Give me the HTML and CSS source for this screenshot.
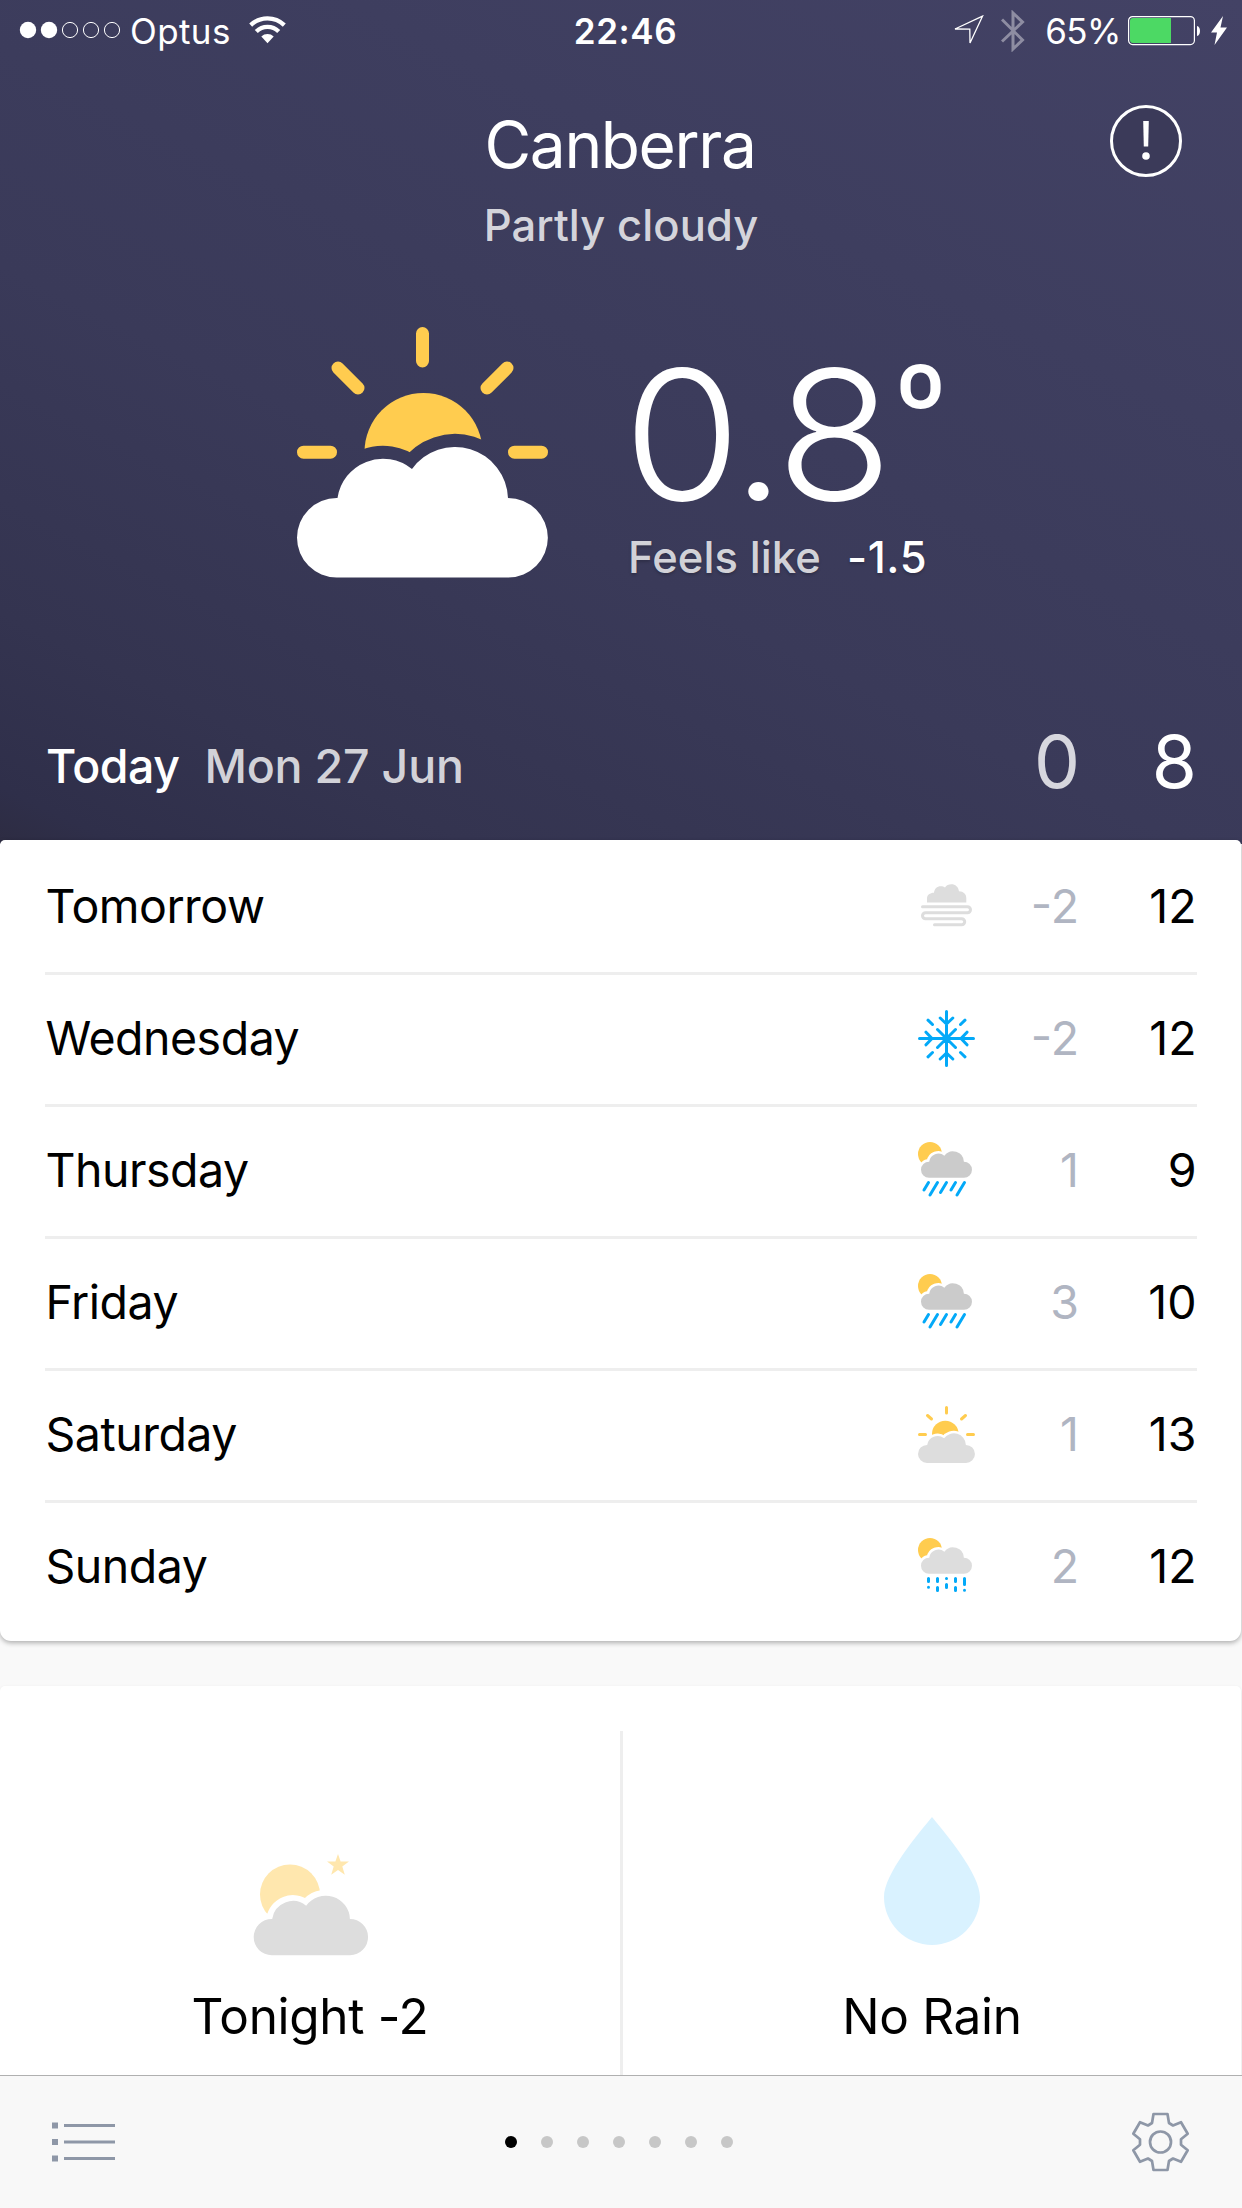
FILE: index.html
```html
<!DOCTYPE html>
<html lang="en">
<head>
<meta charset="utf-8">
<title>Weather</title>
<link rel="stylesheet" href="styles.css">
</head>
<body>
<svg class="defs" width="0" height="0" aria-hidden="true">
  <defs>
    <path id="cloud" d="M39.7 132A39.7 39.7 0 0 1 39.7 52.6H40.5A46 46 0 0 1 115 23.5A53 53 0 0 1 211 52.6A39.7 39.7 0 0 1 211.3 132Z"/>
    <mask id="cut-small" maskUnits="userSpaceOnUse" x="0" y="0" width="57" height="57">
      <rect width="57" height="57" fill="#fff"/>
      <use href="#cloud" transform="translate(3 9) scale(.2032)" fill="#000" stroke="#000" stroke-width="26"/>
    </mask>
    <g id="sun-behind">
      <circle cx="12" cy="12" r="12" fill="#ffcc4f" mask="url(#cut-small)"/>
      <use href="#cloud" transform="translate(3 9) scale(.2032)"/>
    </g>
    <g id="showers">
      <use href="#sun-behind" fill="#cbcbcb"/>
      <path d="M10.5 40.5L6 48M19.500 40.500L12 53M28.500 40.500L22.500 50.500M37.500 40.500L33 48M46.500 40.500L39 53" fill="none" stroke="#03a9f8" stroke-width="3" stroke-linecap="round"/>
    </g>
  </defs>
</svg>
<div class="screen">
  <header class="hero">
    <div class="status">
      <div class="status-left">
        <svg class="signal" width="102" height="18" viewBox="0 0 102 18"><g fill="#fff"><circle cx="9" cy="9" r="8.200"/><circle cx="30" cy="9" r="8.200"/></g><g fill="none" stroke="#fff" stroke-width="1"><circle cx="51" cy="9" r="7.600"/><circle cx="72" cy="9" r="7.600"/><circle cx="93" cy="9" r="7.600"/></g></svg>
        <span class="carrier">Optus</span>
        <svg class="wifi" width="37" height="28" viewBox="0 0 37 28"><g fill="none" stroke="#fff" stroke-width="4.300"><path d="M1.700 9.100A24.500 24.500 0 0 1 35.300 9.100"/><path d="M7.300 15.500A16 16 0 0 1 29.700 15.500"/></g><path d="M18.500 27.300L12.300 20.600A9 9 0 0 1 24.700 20.600Z" fill="#fff"/></svg>
      </div>
      <span class="clock">22:46</span>
      <div class="status-right">
        <svg class="locate" width="30" height="30" viewBox="0 0 30 30"><path d="M28.500 1.200L1 14L15.800 14.200L16 28Z" fill="none" stroke="#fff" stroke-width="1.300"/></svg>
        <svg class="bluetooth" width="24" height="42" viewBox="0 0 24 42"><path d="M1 9.500L21.500 30L12 39V3L21.500 12L1 31.500" fill="none" stroke="#8e8da2" stroke-width="3"/></svg>
        <span class="percent">65%</span>
        <svg class="battery" width="73" height="30" viewBox="0 0 73 30"><rect x=".600" y=".600" width="65.800" height="28" rx="4" fill="none" stroke="#fff" stroke-width="1.200"/><path d="M5 2H43V27H5A3 3 0 0 1 2 24V5A3 3 0 0 1 5 2Z" fill="#4cd964"/><path d="M69 10C73 10.500 73 19.500 69 20Z" fill="#fff"/></svg>
        <svg class="bolt" width="16" height="30" viewBox="0 0 16 30"><path d="M12 0L0 16.500H6L3.500 29L16 11.500H9.500Z" fill="#fff"/></svg>
      </div>
    </div>
    <div class="place">
      <div class="place-text">
        <h1 class="city">Canberra</h1>
        <p class="condition">Partly cloudy</p>
      </div>
      <svg class="alert" width="72" height="72" viewBox="0 0 72 72"><circle cx="36" cy="36" r="34.500" fill="#3b3a59" stroke="#fff" stroke-width="3"/><path d="M33.200 16H38.800L38.200 41.500H33.800Z" fill="#fff"/><circle cx="36" cy="51" r="3.800" fill="#fff"/></svg>
    </div>
    <div class="now">
      <svg class="now-icon" width="251" height="251" viewBox="0 0 251 251">
        <mask id="cut-now" maskUnits="userSpaceOnUse" x="0" y="0" width="251" height="251"><rect width="251" height="251" fill="#fff"/><use href="#cloud" transform="translate(0 118.500)" fill="#000" stroke="#000" stroke-width="26"/></mask>
        <circle cx="126.500" cy="125" r="59" fill="#ffcc4f" mask="url(#cut-now)"/>
        <path d="M125.500 6.500V34M41 41L61 61M210 41L190 61M6.500 125.200H33.500M217.500 125.200H244.500" fill="none" stroke="#ffcc4f" stroke-width="13" stroke-linecap="round"/>
        <use href="#cloud" transform="translate(0 118.500)" fill="#fff"/>
      </svg>
      <div class="now-text">
        <div class="temp"><span class="temp-value">0.8</span><span class="temp-unit">º</span></div>
        <div class="feels"><span class="feels-label">Feels like</span><span class="feels-value">-1.5</span></div>
      </div>
    </div>
    <div class="today">
      <span class="today-name">Today</span>
      <span class="today-date">Mon 27 Jun</span>
      <span class="today-low">0</span>
      <span class="today-high">8</span>
    </div>
  </header>
  <main>
    <section class="card forecast">
      <div class="day"><span class="name">Tomorrow</span>
        <svg class="icon" width="57" height="57" viewBox="0 0 57 57"><path d="M9 24.500V20.500C9 17 12 14.800 16 14.800C16.300 11 19 8.300 22.800 8.300C24.500 8.300 25.800 8.700 27 9.500C28.400 7.400 30.600 6.300 33.300 6.300C37.500 6.300 40.300 9 41 13.200C45.500 13.300 48.300 16 48.300 20V24.500Z" fill="#ddd"/><path d="M4.500 28.700H49.500A3 3 0 0 1 49.500 34.700H7.500A3 3 0 0 0 7.500 40.700H43.700A3 3 0 0 1 43.700 46.700H16.500" fill="none" stroke="#ddd" stroke-width="3" stroke-linecap="round"/></svg>
        <span class="low">-2</span><span class="high">12</span></div>
      <div class="day"><span class="name">Wednesday</span>
        <svg class="icon" width="57" height="57" viewBox="-28.500 -28.500 57 57"><path d="M0-27V27M-27 0H27M-9 -9L9 9M9-9L-9 9M-18.500-18.300L-14-14M18.500-18.300L14-14M-18.500 18.300L-14 14M18.500 18.300L14 14M-6.300-20.500L0-14.500L6.300-20.500M-6.300 20.500L0 14.500L6.300 20.500M-20.500-6.300L-14.500 0L-20.500 6.300M20.500-6.300L14.500 0L20.500 6.300" fill="none" stroke="#03a9f8" stroke-width="3" stroke-linecap="round"/></svg>
        <span class="low">-2</span><span class="high">12</span></div>
      <div class="day"><span class="name">Thursday</span>
        <svg class="icon" width="57" height="57" viewBox="0 0 57 57"><use href="#showers"/></svg>
        <span class="low">1</span><span class="high">9</span></div>
      <div class="day"><span class="name">Friday</span>
        <svg class="icon" width="57" height="57" viewBox="0 0 57 57"><use href="#showers"/></svg>
        <span class="low">3</span><span class="high">10</span></div>
      <div class="day"><span class="name">Saturday</span>
        <svg class="icon" width="57" height="57" viewBox="0 0 57 57">
          <mask id="cut-sat" maskUnits="userSpaceOnUse" x="0" y="0" width="57" height="57"><rect width="57" height="57" fill="#fff"/><use href="#cloud" transform="translate(0 27) scale(.227)" fill="#000" stroke="#000" stroke-width="22"/></mask>
          <circle cx="27.300" cy="28" r="13.300" fill="#ffcc4f" mask="url(#cut-sat)"/>
          <path d="M28.500 1.500V7M9.500 9.500L13.500 13M47.500 9.500L43.500 13M1.500 28.500H7.500M49.500 28.500H55.500" fill="none" stroke="#ffcc4f" stroke-width="3" stroke-linecap="round"/>
          <use href="#cloud" transform="translate(0 27) scale(.227)" fill="#ddd"/>
        </svg>
        <span class="low">1</span><span class="high">13</span></div>
      <div class="day"><span class="name">Sunday</span>
        <svg class="icon" width="57" height="57" viewBox="0 0 57 57"><use href="#sun-behind" fill="#ddd"/><path d="M10.500 40.500V43.500M10.500 49.200V49.300M19.500 40.500V43.500M19.500 49.500V52.500M28.500 40.400V40.500M28.500 46.500V49.500M37.500 40.500V43.500M37.500 49.500V52.500M46.500 40.500V46.500M46.500 52.200V52.300" fill="none" stroke="#03a9f8" stroke-width="3" stroke-linecap="round"/></svg>
        <span class="low">2</span><span class="high">12</span></div>
    </section>
    <section class="card summary">
      <div class="cell">
        <svg width="120" height="140" viewBox="0 0 120 140">
          <mask id="cut-night" maskUnits="userSpaceOnUse" x="0" y="0" width="120" height="140"><rect width="120" height="140" fill="#fff"/><use href="#cloud" transform="translate(3.700 78) scale(.456)" fill="#000" stroke="#000" stroke-width="26"/></mask>
          <circle cx="40" cy="77.500" r="30" fill="#ffe7ae" mask="url(#cut-night)"/>
          <path d="M88 37L90.600 44.600H99L92.300 49.600L94.800 57.700L88 53L81.200 57.700L83.700 49.600L77 44.600H85.400Z" fill="#ffe7ae"/>
          <use href="#cloud" transform="translate(3.700 78) scale(.456)" fill="#ddd"/>
        </svg>
        <span class="cell-label">Tonight -2</span>
      </div>
      <div class="divider"></div>
      <div class="cell">
        <svg width="120" height="140" viewBox="0 0 120 140"><path d="M60 0C74 17 108 57 108 80A48 48 0 0 1 12 80C12 57 46 17 60 0Z" fill="#d9f2ff"/></svg>
        <span class="cell-label">No Rain</span>
      </div>
    </section>
  </main>
  <nav class="toolbar">
    <svg class="list" width="64" height="40" viewBox="0 0 64 40"><path d="M0 .500H6V6.500H0ZM0 17H6V23H0ZM0 33.500H6V39.500H0Z" fill="#8e97a7"/><path d="M12 3.500H63M12 20H63M12 36.500H63" stroke="#8e97a7" stroke-width="3"/></svg>
    <div class="pages"><i class="dot active"></i><i class="dot"></i><i class="dot"></i><i class="dot"></i><i class="dot"></i><i class="dot"></i><i class="dot"></i></div>
    <svg class="gear" width="60" height="60" viewBox="-30.500 -30 60 60"><g fill="none" stroke="#8e97a7" stroke-width="2.700" stroke-linejoin="round"><circle r="10.500"/><path d="M-7-28H7L8.500-19L12.500-16.500L20.500-19.800L27.200-8.200L20.500-2.800V2.800L27.200 8.200L20.500 19.800L12.500 16.500L8.500 19L7 28H-7L-8.500 19L-12.500 16.500L-20.500 19.800L-27.200 8.200L-20.500 2.800V-2.800L-27.200-8.200L-20.500-19.800L-12.500-16.500L-8.500-19Z"/></g></svg>
  </nav>
</div>
</body>
</html>
```
FILE: styles.css
```css
* { box-sizing: border-box; margin: 0; padding: 0; }
body { background: #f9f9f9; font-family: Inter, "Liberation Sans", sans-serif; color: #000; }
svg { display: block; flex: none; }
.defs { position: absolute; }
.screen { width: 1242px; height: 2208px; overflow: hidden; display: flex; flex-direction: column; }

/* Header */
.hero { height: 844px; flex: none; padding-bottom: 4px; display: flex; flex-direction: column; color: #fff;
  background: linear-gradient(206deg, #434265 0%, #3e3e5f 30%, #3a3a59 60%, #343450 84%, #2f2f4a 96%, #2d2c42 100%); }
.status { height: 62px; display: grid; grid-template-columns: 1fr auto 1fr; align-items: center; font-size: 35px; line-height: 62px; }
.status-left, .status-right { display: flex; align-items: center; }
.status-left { padding-left: 19px; }
.signal { margin-top: -2px; }
.carrier { margin-left: 9px; letter-spacing: 0.4px; }
.wifi { margin-left: 18px; margin-top: -2px; }
.clock { font-weight: 600; letter-spacing: 0.6px; padding-left: 9px; }
.status-right { justify-content: flex-end; padding-right: 15px; }
.locate { margin-right: 17px; margin-top: -2px; }
.bluetooth { margin-right: 20px; }
.percent { letter-spacing: -0.5px; margin-right: 7px; }
.battery, .bolt { margin-top: -1px; }
.bolt { margin-left: 10px; }

.place { margin-top: 43px; display: grid; grid-template-columns: 1fr auto 1fr; align-items: start; }
.place-text { grid-column: 2; text-align: center; padding-top: 4px; }
.city { font-size: 64px; font-weight: 400; line-height: 72px; letter-spacing: -1.4px; padding-right: 2px; }
.condition { font-size: 43.500px; font-weight: 500; line-height: 60px; margin-top: 14px; letter-spacing: 0.1px; color: rgba(255, 255, 255, 0.8); }
.alert { grid-column: 3; justify-self: end; margin-right: 60px; }

.now { margin-top: 72px; padding-left: 297px; display: flex; }
.now-text { margin-left: 76px; width: 330px; }
.temp { height: 215px; line-height: 215px; display: flex; font-weight: 300; }
.temp-value { font-size: 180px; letter-spacing: -4.5px; transform: scaleX(1.06); transform-origin: 11px 50%; }
.temp-unit { margin-left: 20px; font-size: 118px; font-weight: 400; line-height: 158px; }
.feels { display: flex; font-size: 43.500px; line-height: 30px; font-weight: 500; padding-left: 4px; text-shadow: 0 2px 3px rgba(0, 0, 0, 0.2); white-space: nowrap; }
.feels-label { color: rgba(255, 255, 255, 0.8); letter-spacing: 0.1px; }
.feels-value { margin-left: 26px; letter-spacing: 0.6px; }

.today { margin-top: auto; height: 148px; padding: 0 45px 0 46px; display: flex; align-items: center; font-size: 46.500px; font-weight: 500; }
.today-name { letter-spacing: -0.5px; }
.today-date { margin-left: 25px; letter-spacing: -0.2px; color: rgba(255, 255, 255, 0.8); }
.today-low, .today-high { font-size: 73px; padding-bottom: 9px; text-align: right; font-weight: 400; }
.today-low { margin-left: auto; color: rgba(255, 255, 255, 0.8); }
.today-high { width: 117px; }

/* Cards */
.card { background: #fff; box-shadow: 0 2px 5px rgba(0, 0, 0, 0.3); }
.forecast { width: 1241px; margin-top: -4px; padding: 0 44px 0 45px; height: 801px; border-radius: 5px 5px 11px 11px; }
.day { height: 132px; display: flex; align-items: center; font-size: 46.500px; }
.day + .day { border-top: 3px solid #eee; padding-bottom: 3px; }
.name { flex: 1; padding-left: 0.5px; letter-spacing: -0.5px; }
.low { width: 105px; padding-right: 1px; text-align: right; color: #b0b5c2; }
.high { width: 117px; padding-right: 0.5px; text-align: right; }

.summary { width: 1241px; height: 389px; margin-top: 45px; border-radius: 5px 5px 0 0; box-shadow: 0 1px 3px rgba(0, 0, 0, 0.1); display: flex; }
.cell { flex: 1; padding: 131px 0 0 1px; display: flex; flex-direction: column; align-items: center; }
.divider { width: 3px; margin: 45px -1px 0 1px; background: #eee; }
.cell-label { font-size: 49.500px; line-height: 60px; margin-top: 29px; letter-spacing: -0.3px; }

/* Bottom bar */
.toolbar { flex: 1; border-top: 1px solid #b0b0b0; background: #f8f8f8; padding: 0 52px; display: flex; align-items: center; justify-content: space-between; position: relative; z-index: 1; }
.pages { display: flex; gap: 24px; padding-right: 8px; }
.dot { width: 12px; height: 12px; border-radius: 50%; background: #c7c7c7; }
.dot.active { background: #000; }
```
